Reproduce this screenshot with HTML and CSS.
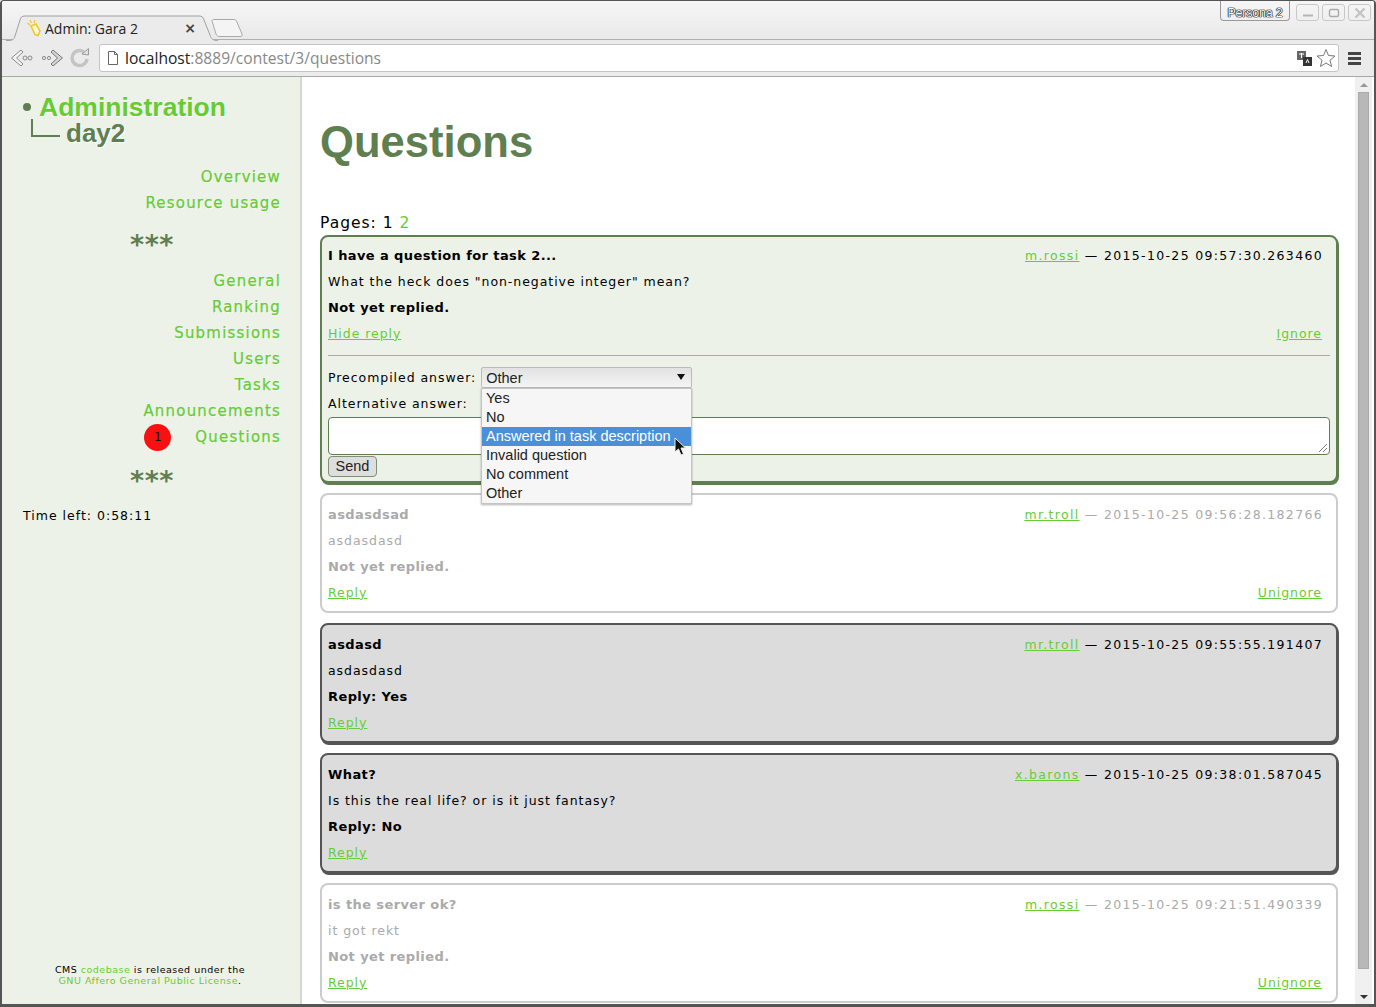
FILE: index.html
```html
<!DOCTYPE html>
<html lang="en">
<head>
  <meta charset="UTF-8" />
  <title>Admin: Gara 2</title>
  <link rel="stylesheet" href="styles.css">
</head>
<body>
<div class="window">
  <header class="chrome">
    <div class="tabstrip">
      <div class="tab">
        <svg class="tab-shape" width="212" height="26" viewBox="0 0 212 26"><path d="M0 25.5 H3 C7 25.5 8 24 9 21 L14 5 C15 2 16 1 19 1 H193 C196 1 197 2 198 5 L204 20 C205 24 207 25.5 212 25.5" fill="#ebebeb" stroke="#a0a0a0"/></svg>
        <svg class="favicon" width="16" height="18" viewBox="0 0 16 18"><path d="M4 7 L9 5 L13 12 L11 16.5 L8 15.5 Z" fill="#fff8d8" stroke="#eec92c" stroke-width="1.6"/><path d="M3 1 L4.5 4 M0.5 4 L3 6 M8 1 L7 4" stroke="#eec92c" stroke-width="1.2"/></svg>
        <span class="tab-title">Admin: Gara 2</span>
        <span class="tab-close">×</span>
      </div>
      <svg class="newtab" width="34" height="19" viewBox="0 0 34 19"><path d="M2 2 C2 1 3 .5 4 .5 H24 C25 .5 26 1 26.5 2 L32 15 C32.5 17 31.5 17.5 30 17.5 H10 C8 17.5 7 17 6 15 Z" fill="#f4f4f4" stroke="#a8a8a8"/></svg>
      <div class="persona">Persona 2</div>
      <div class="winbtns">
        <span class="winbtn"><svg width="12" height="8" viewBox="0 0 12 8"><path d="M1 6.5H11" stroke="#b5b5b5" stroke-width="2"/></svg></span>
        <span class="winbtn"><svg width="12" height="10" viewBox="0 0 12 10"><rect x="1.5" y="1.5" width="9" height="7" rx="1.5" fill="none" stroke="#aaa" stroke-width="1.4"/></svg></span>
        <span class="winbtn"><svg width="12" height="12" viewBox="0 0 12 12"><path d="M1.5 1.5L10.5 10.5M10.5 1.5L1.5 10.5" stroke="#c4c4c4" stroke-width="2.4"/></svg></span>
      </div>
    </div>
    <div class="toolbar">
      <svg class="navicon" width="24" height="22" viewBox="0 0 24 22"><path d="M11 3 L1.5 11 L11 19 L13 17 L6.5 11 L13 5 Z" fill="#f4f4f4" stroke="#8a8a8a"/><circle cx="15" cy="11" r="2" fill="none" stroke="#8a8a8a"/><circle cx="20" cy="11" r="2" fill="none" stroke="#8a8a8a"/></svg>
      <svg class="navicon" width="24" height="22" viewBox="0 0 24 22"><path d="M13 3 L22.5 11 L13 19 L11 17 L17.5 11 L11 5 Z" fill="#d4d4d4" stroke="#777"/><circle cx="4" cy="11" r="1.6" fill="none" stroke="#8a8a8a"/><circle cx="9" cy="11" r="1.6" fill="none" stroke="#8a8a8a"/></svg>
      <svg class="navicon reload" width="22" height="22" viewBox="0 0 22 22"><path d="M18 12 A7.5 7.5 0 1 1 15 5" fill="none" stroke="#c4c4c4" stroke-width="3.4"/><path d="M13 7 L19.5 8 L19.5 1.5 Z" fill="#e2e2e2" stroke="#999"/></svg>
      <div class="omnibox">
        <svg class="pageicon" width="12" height="14" viewBox="0 0 12 14"><path d="M1.5 .5H7.5L10.5 3.5V13.5H1.5Z M7.5 .5V3.5H10.5" fill="#fff" stroke="#666"/></svg>
        <span class="url"><b>localhost</b>:8889/contest/3/questions</span>
        <svg class="translate" width="15" height="15" viewBox="0 0 15 15"><rect x="0" y="0" width="9" height="9" fill="#666"/><rect x="6" y="6" width="9" height="9" fill="#333"/><path d="M2 3H7M4.5 2V7M9 12L10.5 8.5L12 12" stroke="#fff" fill="none"/></svg>
        <svg class="star" width="20" height="20" viewBox="0 0 20 20"><path d="M10 1.5 L12.5 7.5 L19 8 L14 12.2 L15.6 18.5 L10 15 L4.4 18.5 L6 12.2 L1 8 L7.5 7.5 Z" fill="#fff" stroke="#777"/></svg>
      </div>
      <div class="hamburger"><i></i><i></i><i></i></div>
    </div>
  </header>

  <div class="page">
    <aside class="sidebar">
      <div class="brand">
        <div class="brand-top"><span class="dot"></span><span class="brand-name">Administration</span></div>
        <div class="brand-sub"><span class="elbow"></span><span class="brand-contest">day2</span></div>
      </div>
      <ul class="menu">
        <li><a>Overview</a></li>
        <li><a>Resource usage</a></li>
      </ul>
      <div class="stars">***</div>
      <ul class="menu">
        <li><a>General</a></li>
        <li><a>Ranking</a></li>
        <li><a>Submissions</a></li>
        <li><a>Users</a></li>
        <li><a>Tasks</a></li>
        <li><a>Announcements</a></li>
        <li class="with-badge"><span class="badge">1</span><a>Questions</a></li>
      </ul>
      <div class="stars stars-low">***</div>
      <p class="timeleft">Time left: 0:58:11</p>
      <p class="license">CMS <a>codebase</a> is released under the<br><a>GNU Affero General Public License</a>.</p>
    </aside>

    <main class="content">
      <h1 class="title">Questions</h1>
      <p class="pages">Pages: 1 <a>2</a></p>

      <section class="card card-open">
        <div class="row"><b>I have a question for task 2...</b><span class="meta"><a>m.rossi</a> — 2015-10-25 09:57:30.263460</span></div>
        <div class="row">What the heck does "non-negative integer" mean?</div>
        <div class="row"><b>Not yet replied.</b></div>
        <div class="row"><a>Hide reply</a><a class="right">Ignore</a></div>
        <hr class="rule">
        <div class="row">Precompiled answer:<span class="select">Other<i class="arrow"></i></span></div>
        <div class="row">Alternative answer:</div>
        <div class="textbox"><svg class="grip" width="10" height="10" viewBox="0 0 10 10"><path d="M1 9L9 1M5 9L9 5" stroke="#777"/></svg></div>
        <button class="send">Send</button>
      </section>

      <section class="card card-ignored">
        <div class="row"><b>asdasdsad</b><span class="meta"><a>mr.troll</a> — 2015-10-25 09:56:28.182766</span></div>
        <div class="row">asdasdasd</div>
        <div class="row"><b>Not yet replied.</b></div>
        <div class="row"><a>Reply</a><a class="right">Unignore</a></div>
      </section>

      <section class="card card-answered">
        <div class="row"><b>asdasd</b><span class="meta"><a>mr.troll</a> — 2015-10-25 09:55:55.191407</span></div>
        <div class="row">asdasdasd</div>
        <div class="row"><b>Reply: Yes</b></div>
        <div class="row"><a>Reply</a></div>
      </section>

      <section class="card card-answered">
        <div class="row"><b>What?</b><span class="meta"><a>x.barons</a> — 2015-10-25 09:38:01.587045</span></div>
        <div class="row">Is this the real life? or is it just fantasy?</div>
        <div class="row"><b>Reply: No</b></div>
        <div class="row"><a>Reply</a></div>
      </section>

      <section class="card card-ignored">
        <div class="row"><b>is the server ok?</b><span class="meta"><a>m.rossi</a> — 2015-10-25 09:21:51.490339</span></div>
        <div class="row">it got rekt</div>
        <div class="row"><b>Not yet replied.</b></div>
        <div class="row"><a>Reply</a><a class="right">Unignore</a></div>
      </section>
    </main>

    <div class="scrollbar">
      <i class="sb-up"></i>
      <div class="sb-thumb"></div>
      <i class="sb-down"></i>
    </div>
  </div>

  <ul class="popup">
    <li>Yes</li>
    <li>No</li>
    <li class="selected">Answered in task description</li>
    <li>Invalid question</li>
    <li>No comment</li>
    <li>Other</li>
  </ul>
  <svg class="cursor" width="13" height="20" viewBox="0 0 13 20"><path d="M1 1 V15 L4.5 12 L7 18 L9.5 17 L7 11 L11.5 11 Z" fill="#111" stroke="#eee"/></svg>
</div>
</body>
</html>
```

FILE: styles.css
```css
* {
  box-sizing: border-box;
}

html, body {
  margin: 0;
  height: 100%;
  overflow: hidden;
}

body {
  font-family: "DejaVu Sans", sans-serif;
  font-size: 12.5px;
  color: #000;
  background: #e8e8e8;
}

.window {
  position: relative;
  width: 1376px;
  height: 1007px;
  display: flex;
  flex-direction: column;
  border: 1px solid #555;
  border-width: 1px 2px 3px 2px;
  border-radius: 4px 4px 0 0;
  background: #ebebeb;
  overflow: hidden;
}

/* browser chrome */
.chrome {
  height: 76px;
  flex: none;
  background: #ebebeb;
  border-bottom: 1px solid #a8a8a8;
}

.tabstrip {
  height: 39px;
  display: flex;
  align-items: flex-end;
  padding-left: 4px;
  background: linear-gradient(#f6f6f6, #e9e9e9);
  border-bottom: 1px solid #b0b0b0;
}

.tab {
  position: relative;
  width: 203px;
  height: 24px;
  display: flex;
  align-items: center;
  padding: 0 13px 0 21px;
  margin-bottom: -1px;
}

.tab-shape {
  position: absolute;
  left: 0;
  top: -1px;
}

.favicon {
  position: relative;
  flex: none;
}

.tab-title {
  position: relative;
  margin-left: 2px;
  font-family: "Open Sans", sans-serif;
  font-size: 14px;
  color: #222;
  flex: 1;
  white-space: nowrap;
}

.tab-close {
  position: relative;
  font-size: 14px;
  font-weight: bold;
  color: #444;
}

.newtab {
  flex: none;
  margin-left: 1px;
  margin-bottom: 1px;
}

.persona {
  margin-left: auto;
  align-self: flex-start;
  height: 20px;
  width: 70px;
  border: 1px solid #999;
  border-top: none;
  border-radius: 0 0 4px 4px;
  font-family: "Liberation Sans", sans-serif;
  font-size: 12.5px;
  line-height: 24px;
  text-align: center;
  color: #fff;
  letter-spacing: -.2px;
  text-shadow: 0 0 1px #000, 0 0 1px #000, 0 0 1px #000, 0 0 1px #000;
}

.winbtns {
  align-self: flex-start;
  display: flex;
  gap: 3px;
  margin: 3px 3px 0 6px;
}

.winbtn {
  width: 23px;
  height: 17px;
  display: flex;
  align-items: center;
  justify-content: center;
  border: 1px solid #c8c8c8;
  border-radius: 3px;
}

.toolbar {
  height: 36px;
  display: flex;
  align-items: center;
  padding-left: 8px;
  gap: 6px;
}

.navicon {
  flex: none;
}

.reload {
  margin-left: -1px;
}

.omnibox {
  width: 1240px;
  height: 28px;
  margin-left: 2px;
  display: flex;
  align-items: center;
  padding: 0 2px 0 7px;
  background: #fff;
  border: 1px solid #c4c4c4;
  border-radius: 3px;
}

.url {
  margin-left: 6px;
  font-family: "Open Sans", sans-serif;
  font-size: 15.6px;
  color: #888;
  flex: 1;
}

.url b {
  font-weight: normal;
  color: #222;
}

.translate {
  margin-right: 4px;
}

.hamburger {
  margin-left: 3px;
  width: 13px;
  display: flex;
  flex-direction: column;
  gap: 2px;
}

.hamburger i {
  height: 3px;
  background: #444;
}

/* page */
.page {
  flex: 1;
  display: flex;
  min-height: 0;
  background: #fff;
}

.sidebar {
  position: relative;
  width: 300px;
  flex: none;
  padding: 0 19px 0 21px;
  background: #edf2e8;
  border-right: 2px solid #d4d9cf;
}

.brand {
  padding-top: 15px;
  font-family: "Liberation Sans", sans-serif;
  font-weight: bold;
}

.brand-top {
  display: flex;
  align-items: center;
  height: 30px;
}

.dot {
  width: 8px;
  height: 8px;
  margin-right: 8px;
  border-radius: 50%;
  background: #5f7f50;
}

.brand-name {
  font-size: 26.5px;
  line-height: 25px;
  color: #66cc33;
  text-shadow: 1px 1px 1px #fff;
}

.brand-sub {
  display: flex;
  align-items: center;
  height: 26px;
  margin-top: -2px;
  padding-left: 8px;
}

.elbow {
  width: 29px;
  height: 18px;
  margin: -10px 6px 0 0;
  border-left: 2px solid #5f7f50;
  border-bottom: 2px solid #5f7f50;
}

.brand-contest {
  font-size: 26px;
  line-height: 24px;
  color: #5f7f50;
  text-shadow: 1px 1px 1px #fff;
}

.menu {
  list-style: none;
  margin: 0;
  padding: 0;
  font-size: 15px;
  letter-spacing: 1.2px;
  text-align: right;
}

.brand + .menu {
  margin-top: 17px;
}

.menu li {
  height: 26px;
  line-height: 28px;
  color: #66cc33;
  -webkit-text-stroke: .25px #66cc33;
  text-shadow: 1px 1px 1px #fff;
  white-space: nowrap;
}

.with-badge {
  display: flex;
  justify-content: flex-end;
  align-items: center;
}

.with-badge a {
  margin-top: 2px;
}

.badge {
  width: 27px;
  height: 27px;
  margin: 2px 24px 0 0;
  border-radius: 50%;
  background: #f91010;
  color: #111;
  font-size: 12px;
  line-height: 27px;
  letter-spacing: 0;
  text-align: center;
  text-shadow: none;
  -webkit-text-stroke: 0;
}

.stars {
  height: 52px;
  line-height: 60px;
  font-size: 27px;
  font-weight: bold;
  letter-spacing: .5px;
  text-align: center;
  color: #5f7f50;
}

.stars-low {
  line-height: 64px;
}

.timeleft {
  margin: 2px 0 0;
  letter-spacing: 1px;
  line-height: 26px;
}

.license {
  position: absolute;
  left: 0;
  right: 2px;
  bottom: 18px;
  margin: 0;
  font-size: 9.5px;
  line-height: 11px;
  text-align: center;
  letter-spacing: .5px;
}

.license a {
  color: #66cc33;
}

.content {
  flex: 1;
  min-width: 0;
  padding: 0 17px 0 18px;
  overflow: hidden;
  letter-spacing: .95px;
}

.title {
  margin: 0;
  padding-top: 39px;
  height: 133px;
  font-family: "Liberation Sans", sans-serif;
  font-size: 43.6px;
  line-height: 52px;
  color: #5f7f50;
  letter-spacing: 0;
}

.pages {
  margin: 0;
  height: 25px;
  font-size: 15.5px;
  line-height: 26px;
  letter-spacing: 1px;
}

.pages a {
  color: #66cc33;
}

.card {
  margin-bottom: 10px;
  padding: 6px 6px;
  border: 2px solid #5f7f50;
  border-radius: 8px;
  box-shadow: 1px 2px 0 #5f7f50;
}

.card-open {
  padding: 5px 6px 7px;
  background: #edf2e8;
}

.card-ignored {
  border-color: #ccc;
  color: #aaa;
  box-shadow: none;
}

.card-answered {
  border-color: #555;
  background: #dcdcdc;
  box-shadow: 1px 2px 0 #555;
}

.row {
  display: flex;
  align-items: center;
  height: 26px;
  white-space: nowrap;
}

.row b {
  font-size: 13px;
  letter-spacing: .4px;
}

.meta {
  margin-left: auto;
  padding-right: 7px;
  letter-spacing: 1.33px;
}

.row a {
  color: #66cc33;
  text-decoration: underline;
}

.right {
  margin-left: auto;
  padding-right: 8px;
}

.rule {
  margin: 9px 0 8px;
  border: 0;
  border-top: 1px solid #aaa;
}

.select {
  position: relative;
  display: block;
  width: 211px;
  height: 21px;
  margin-left: 5px;
  padding-left: 4px;
  font-family: "Liberation Sans", sans-serif;
  font-size: 14.5px;
  line-height: 20px;
  letter-spacing: 0;
  color: #222;
  background: linear-gradient(#e2e2e2, #f4f4f4);
  border: 1px solid #bbb;
  border-radius: 2px;
}

.arrow {
  position: absolute;
  right: 6px;
  top: 6px;
  border: 4px solid transparent;
  border-top: 6px solid #111;
  border-bottom: 0;
}

.textbox {
  position: relative;
  height: 38px;
  margin-top: 1px;
  background: #fff;
  border: 1px solid #5f7f50;
  border-radius: 4px;
}

.grip {
  position: absolute;
  right: 1px;
  bottom: 1px;
}

.send {
  display: block;
  width: 49px;
  height: 21px;
  margin: 1px 0 -3px;
  padding: 0 0 2px;
  font-family: "Liberation Sans", sans-serif;
  font-size: 14.5px;
  background: #dedede;
  color: #222;
  border: 1px solid #7d8f74;
  border-radius: 4px;
}

.scrollbar {
  width: 17px;
  flex: none;
  margin-right: 2px;
  display: flex;
  flex-direction: column;
  align-items: center;
  background: #f0f0f0;
}

.sb-up {
  margin: 6px 0 5px;
  border: 4px solid transparent;
  border-bottom: 4px solid #999;
  border-top: 0;
}

.sb-thumb {
  width: 11px;
  flex: 1;
  background: #b8b8b8;
  border: 1px solid #aaa;
}

.sb-down {
  margin: 26px 0 5px;
  border: 4px solid transparent;
  border-top: 4px solid #333;
  border-bottom: 0;
}

/* open dropdown, sits over the card */
.popup {
  position: absolute;
  left: 479px;
  top: 387px;
  width: 211px;
  margin: 0;
  padding: 0;
  list-style: none;
  font-family: "Liberation Sans", sans-serif;
  font-size: 14.5px;
  color: #222;
  background: #f6f6f6;
  border: 1px solid #c4c4c4;
  box-shadow: 0 1px 2px rgba(0, 0, 0, .3);
}

.popup li {
  height: 19px;
  line-height: 19px;
  padding-left: 4px;
}

.popup .selected {
  background: #4a90d9;
  color: #fff;
}

.cursor {
  position: absolute;
  left: 672px;
  top: 436px;
}
```
